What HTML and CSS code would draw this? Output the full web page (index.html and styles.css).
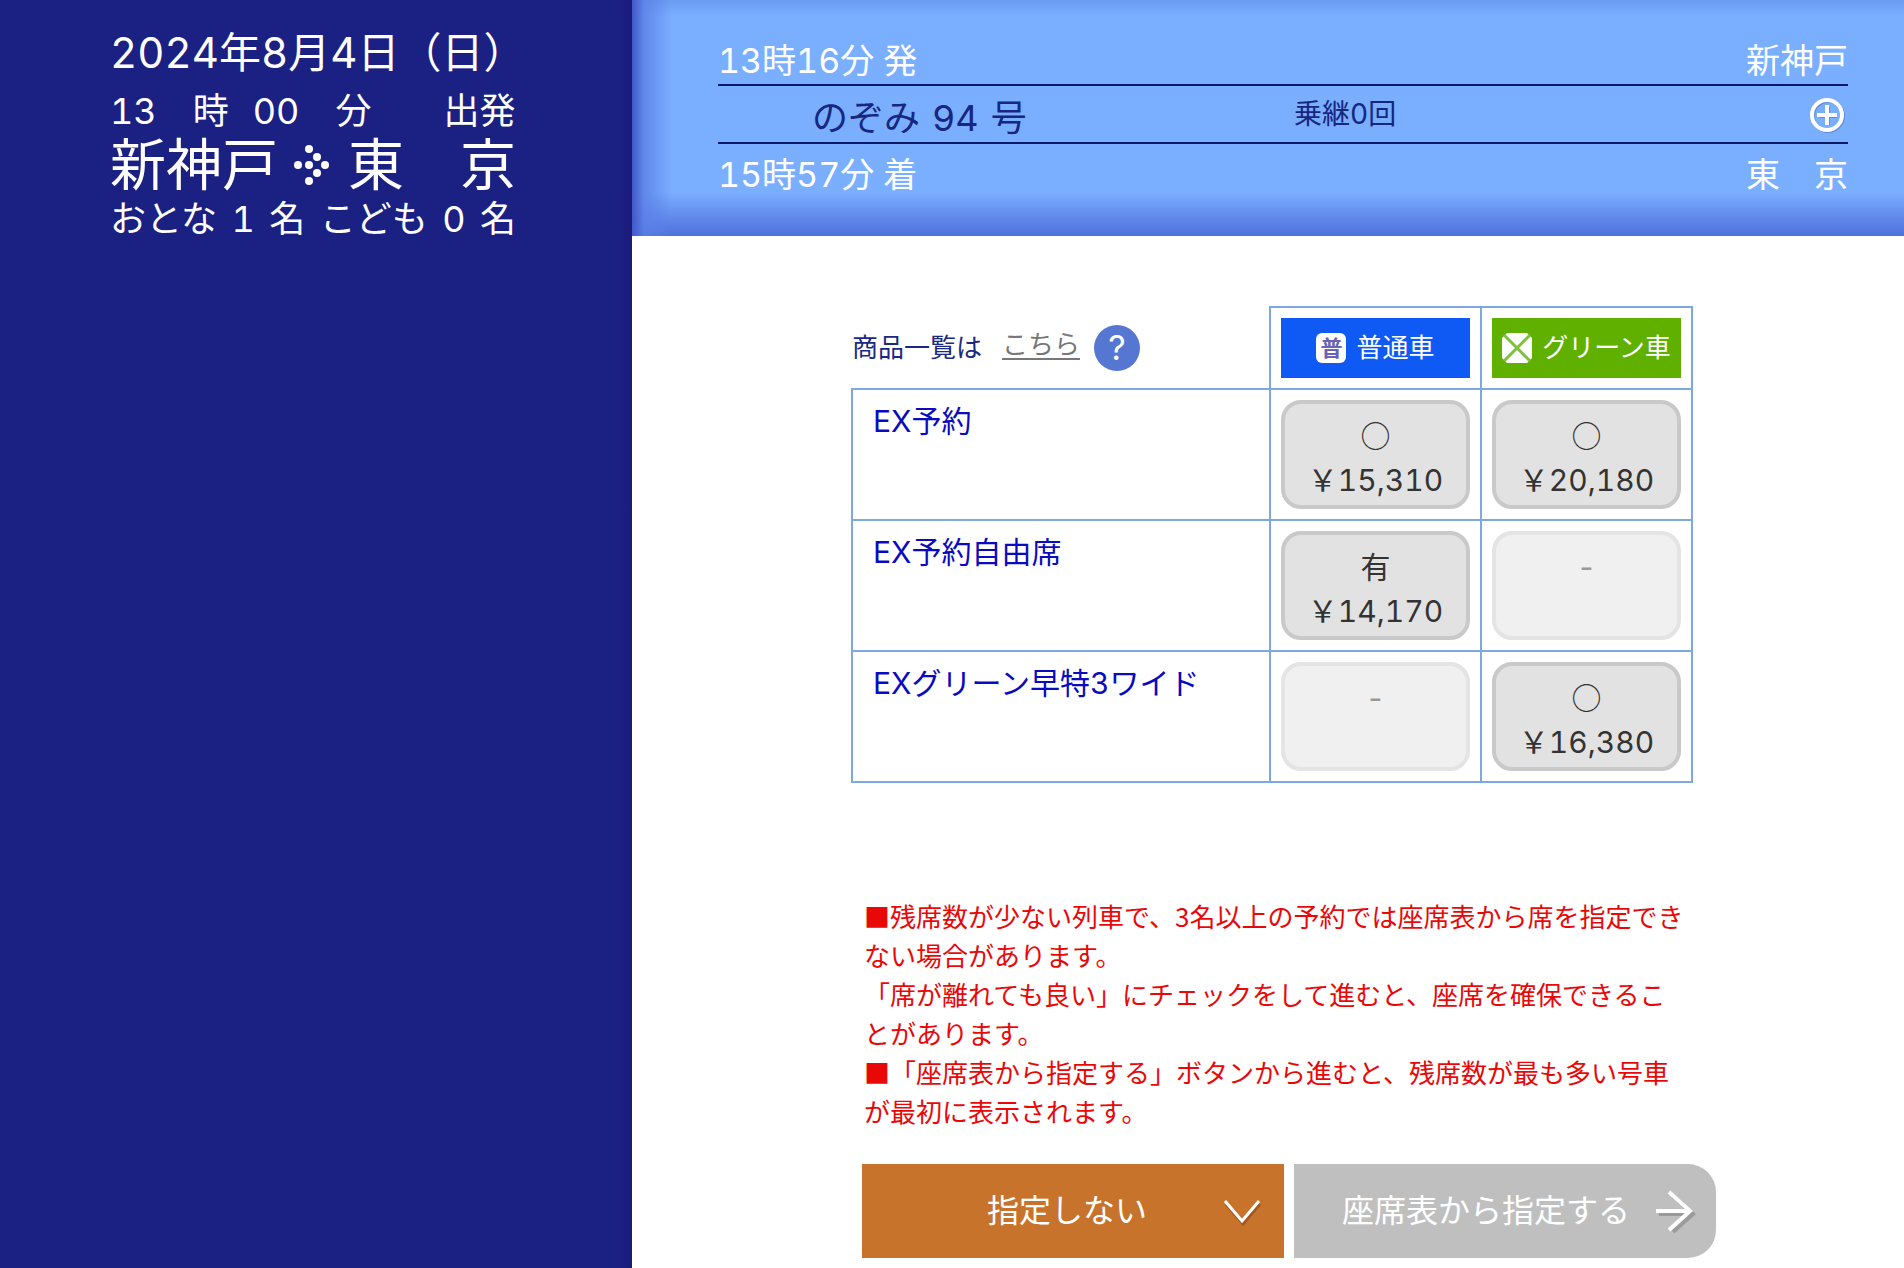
FILE: index.html
```html
<!DOCTYPE html>
<html lang="ja">
<head>
<meta charset="utf-8">
<meta name="viewport" content="width=device-width, initial-scale=1">
<title>商品選択</title>
<link rel="stylesheet" href="styles.css">
</head>
<body>
<div class="page">
  <aside class="search">
    <div class="search-date">2024年8月4日（日）</div>
    <div class="search-time"><span>13　時</span><span>00　分　　出発</span></div>
    <div class="search-route">
      <span>新神戸</span>
      <svg class="route-arrow" width="40" height="44" viewBox="0 0 40 44" fill="#fff" aria-hidden="true">
        <circle cx="5" cy="22" r="4"/><circle cx="16" cy="22" r="4"/><circle cx="32" cy="22" r="4"/>
        <circle cx="24" cy="14" r="4"/><circle cx="24" cy="30" r="4"/>
        <circle cx="16" cy="6" r="4"/><circle cx="16" cy="38" r="4"/>
      </svg>
      <span>東　京</span>
    </div>
    <div class="search-people"><span>おとな</span><span>1</span><span>名</span><span>こども</span><span>0</span><span>名</span></div>
  </aside>

  <div class="content">
    <header class="train">
      <div class="stop"><span>13時16分 発</span><span>新神戸</span></div>
      <div class="service">
        <span class="service-name"><span>のぞみ</span><span>94</span><span>号</span></span>
        <span class="service-transfer">乗継0回</span>
        <button class="expand" type="button" aria-label="詳細を開く">
          <svg width="40" height="40" viewBox="0 0 40 40" fill="none" aria-hidden="true">
            <g stroke="#4a68a8" stroke-opacity=".5"><circle cx="20" cy="22" r="15" stroke-width="4"/><path d="M20 13v18M11 22h18" stroke-width="4"/></g>
            <g stroke="#fff"><circle cx="19" cy="21" r="15" stroke-width="4"/><path d="M19 11v20M9 21h20" stroke-width="4"/></g>
          </svg>
        </button>
      </div>
      <div class="stop stop-arrival"><span>15時57分 着</span><span>東　京</span></div>
    </header>

    <main class="main">
      <table class="fares">
        <colgroup><col><col class="col-seat"><col class="col-seat"></colgroup>
        <thead>
          <tr>
            <td class="fares-guide">
              <div class="guide">
                <span>商品一覧は</span>
                <a class="guide-link" href="#list">こちら</a>
                <a class="guide-help" href="#help" aria-label="ヘルプ">?</a>
              </div>
            </td>
            <th scope="col"><div class="seat seat-ordinary"><span class="seat-mark">普</span>普通車</div></th>
            <th scope="col"><div class="seat seat-green">
              <svg width="30" height="30" viewBox="0 0 30 30" aria-hidden="true">
                <path d="M5 0h20l5 5v20l-5 5H5l-5-5V5z" fill="#fff"/>
                <path d="M2 2l26 26M28 2L2 28" stroke="#7dc03a" stroke-width="3"/>
              </svg>グリーン車</div></th>
          </tr>
        </thead>
        <tbody>
          <tr>
            <th scope="row">EX予約</th>
            <td><button class="fare" type="button"><span class="mark">○</span><span>￥15,310</span></button></td>
            <td><button class="fare" type="button"><span class="mark">○</span><span>￥20,180</span></button></td>
          </tr>
          <tr>
            <th scope="row">EX予約自由席</th>
            <td><button class="fare" type="button"><span class="mark">有</span><span>￥14,170</span></button></td>
            <td><button class="fare" type="button" disabled>-</button></td>
          </tr>
          <tr>
            <th scope="row">EXグリーン早特3ワイド</th>
            <td><button class="fare" type="button" disabled>-</button></td>
            <td><button class="fare" type="button"><span class="mark">○</span><span>￥16,380</span></button></td>
          </tr>
        </tbody>
      </table>

      <div class="notes">
        <p>■残席数が少ない列車で、3名以上の予約では座席表から席を指定できない場合があります。</p>
        <p>「席が離れても良い」にチェックをして進むと、座席を確保できることがあります。</p>
        <p>■「座席表から指定する」ボタンから進むと、残席数が最も多い号車が最初に表示されます。</p>
      </div>

      <div class="actions">
        <button class="action action-any" type="button">
          <span>指定しない</span>
          <svg width="40" height="48" viewBox="0 0 40 48" fill="none" stroke-width="3" aria-hidden="true">
            <path d="M2 17l17 20 17-20" stroke="#7b3f12" stroke-opacity=".5"/>
            <path d="M1 14l17 20 17-20" stroke="#fff"/>
          </svg>
        </button>
        <button class="action action-map" type="button">
          <span>座席表から指定する</span>
          <svg width="40" height="48" viewBox="0 0 40 48" fill="none" stroke-width="4" aria-hidden="true">
            <path d="M3 27h34M17 9l20 18-20 18" stroke="#777" stroke-opacity=".5"/>
            <path d="M0 24h34M13 5l21 19-21 19" stroke="#fff"/>
          </svg>
        </button>
      </div>
    </main>
  </div>
</div>
</body>
</html>
```
FILE: styles.css
```css
* { box-sizing: border-box; }

body {
  margin: 0;
  background: #fff;
  color: #333;
  font-family: Inter, "Noto Sans CJK JP", sans-serif;
  font-variant-numeric: tabular-nums;
}

button { font: inherit; cursor: pointer; }

.page {
  display: grid;
  grid-template-columns: 632px minmax(0, 1fr);
  min-height: 100vh;
}

/* Search conditions */
.search {
  padding: 20px 116px 0 110px;
  background: linear-gradient(to left, #1b1a78, #1b2083 10px);
  color: #fff;
  font-size: 36px;
  line-height: 50px;
  white-space: nowrap;
}

.search-date { font-size: 42px; line-height: 66px; }

.search-time {
  display: flex;
  gap: 24px;
}

.search-route {
  display: flex;
  align-items: center;
  justify-content: space-between;
  font-size: 56px;
  line-height: 58px;
}

.search-people {
  display: flex;
  justify-content: space-between;
}

/* Selected train */
.train {
  padding: 38px 56px 30px 86px;
  background:
    linear-gradient(to right, #4058c8, #5a7fe6cc 12px, #7aaeff00 40px),
    linear-gradient(to top, #4f72da, #5f86ea 16px, #7aaeff00 44px),
    linear-gradient(to bottom, #6a9cf0, #7aaeff00 16px),
    #7aaeff;
  color: #fff;
  font-size: 34px;
}

.stop {
  display: flex;
  justify-content: space-between;
  line-height: 46px;
}

.stop-arrival { line-height: 62px; }

.service {
  display: grid;
  grid-template-columns: 576px minmax(0, 1fr) 40px;
  align-items: center;
  height: 60px;
  border-top: 2px solid #0b1a66;
  border-bottom: 2px solid #0b1a66;
  color: #17267f;
}

.service-name {
  display: flex;
  gap: 12px;
  padding: 8px 0 0 94px;
  font-size: 36px;
  line-height: 48px;
}

.service-transfer { font-size: 28px; line-height: 56px; }

.expand {
  display: flex;
  padding: 0;
  border: 0;
  background: none;
}

/* Fare table */
.main { padding: 70px 188px 9px 219px; }

.fares {
  width: calc(100% - 23px);
  border-collapse: collapse;
  table-layout: fixed;
  font-size: 30px;
}

.col-seat { width: 211px; }

.fares th,
.fares td {
  padding: 10px;
  border: 2px solid #7da9e0;
  font-weight: 400;
}

.fares .fares-guide {
  padding: 0;
  border-top: 0;
  border-left: 0;
}

.fares tbody th {
  padding-left: 20px;
  color: #0a0ac0;
  line-height: 42px;
  text-align: left;
  vertical-align: top;
}

.guide {
  display: flex;
  align-items: center;
  color: #1b2a80;
  font-size: 26px;
  line-height: 26px;
}

.guide-link {
  margin: 0 14px 4px 20px;
  border-bottom: 2px solid #777;
  color: #777;
  text-decoration: none;
}

.guide-help {
  width: 46px;
  border-radius: 50%;
  background: #5577d2;
  color: #fff;
  font-size: 34px;
  line-height: 46px;
  text-align: center;
  text-decoration: none;
}

.seat {
  display: flex;
  align-items: center;
  justify-content: center;
  gap: 10px;
  height: 60px;
  color: #fff;
  font-size: 26px;
  line-height: 30px;
}

.seat-ordinary { background: #0f5af5; }
.seat-green { background: #60b000; }

.seat-mark {
  width: 30px;
  border-radius: 6px;
  background: #fff;
  color: #6a62b4;
  font-size: 22px;
  font-weight: 700;
}

.fare {
  display: flex;
  flex-direction: column;
  align-items: center;
  width: 100%;
  height: 109px;
  padding: 7px 0 0;
  border: 4px solid #c9c9c9;
  border-radius: 20px;
  background: #e2e2e2;
  color: #333;
  line-height: 46px;
}

.fare:disabled {
  padding-top: 9px;
  border-color: #e4e4e4;
  background: #f0f0f0;
  color: #999;
  cursor: default;
}

.mark,
.notes { font-family: "Noto Sans CJK JP", sans-serif; }

/* Notes */
.notes {
  margin-top: 113px;
  padding: 0 27px 0 13px;
  color: #e80808;
  font-size: 26px;
  line-height: 39px;
}

.notes p { margin: 0; }

/* Bottom buttons */
.actions {
  display: grid;
  grid-template-columns: 1fr 1fr;
  gap: 10px;
  margin-top: 34px;
  padding-left: 11px;
}

.action {
  display: flex;
  align-items: center;
  justify-content: space-between;
  height: 94px;
  padding: 0 20px 0 48px;
  border: 0;
  color: #fff;
  font-size: 32px;
  line-height: 48px;
}

.action span { flex: 1; }

.action-any { background: #c8732c; }

.action-map {
  padding-left: 22px;
  border-radius: 0 28px 28px 0;
  background: #bfbfbf;
}
```
